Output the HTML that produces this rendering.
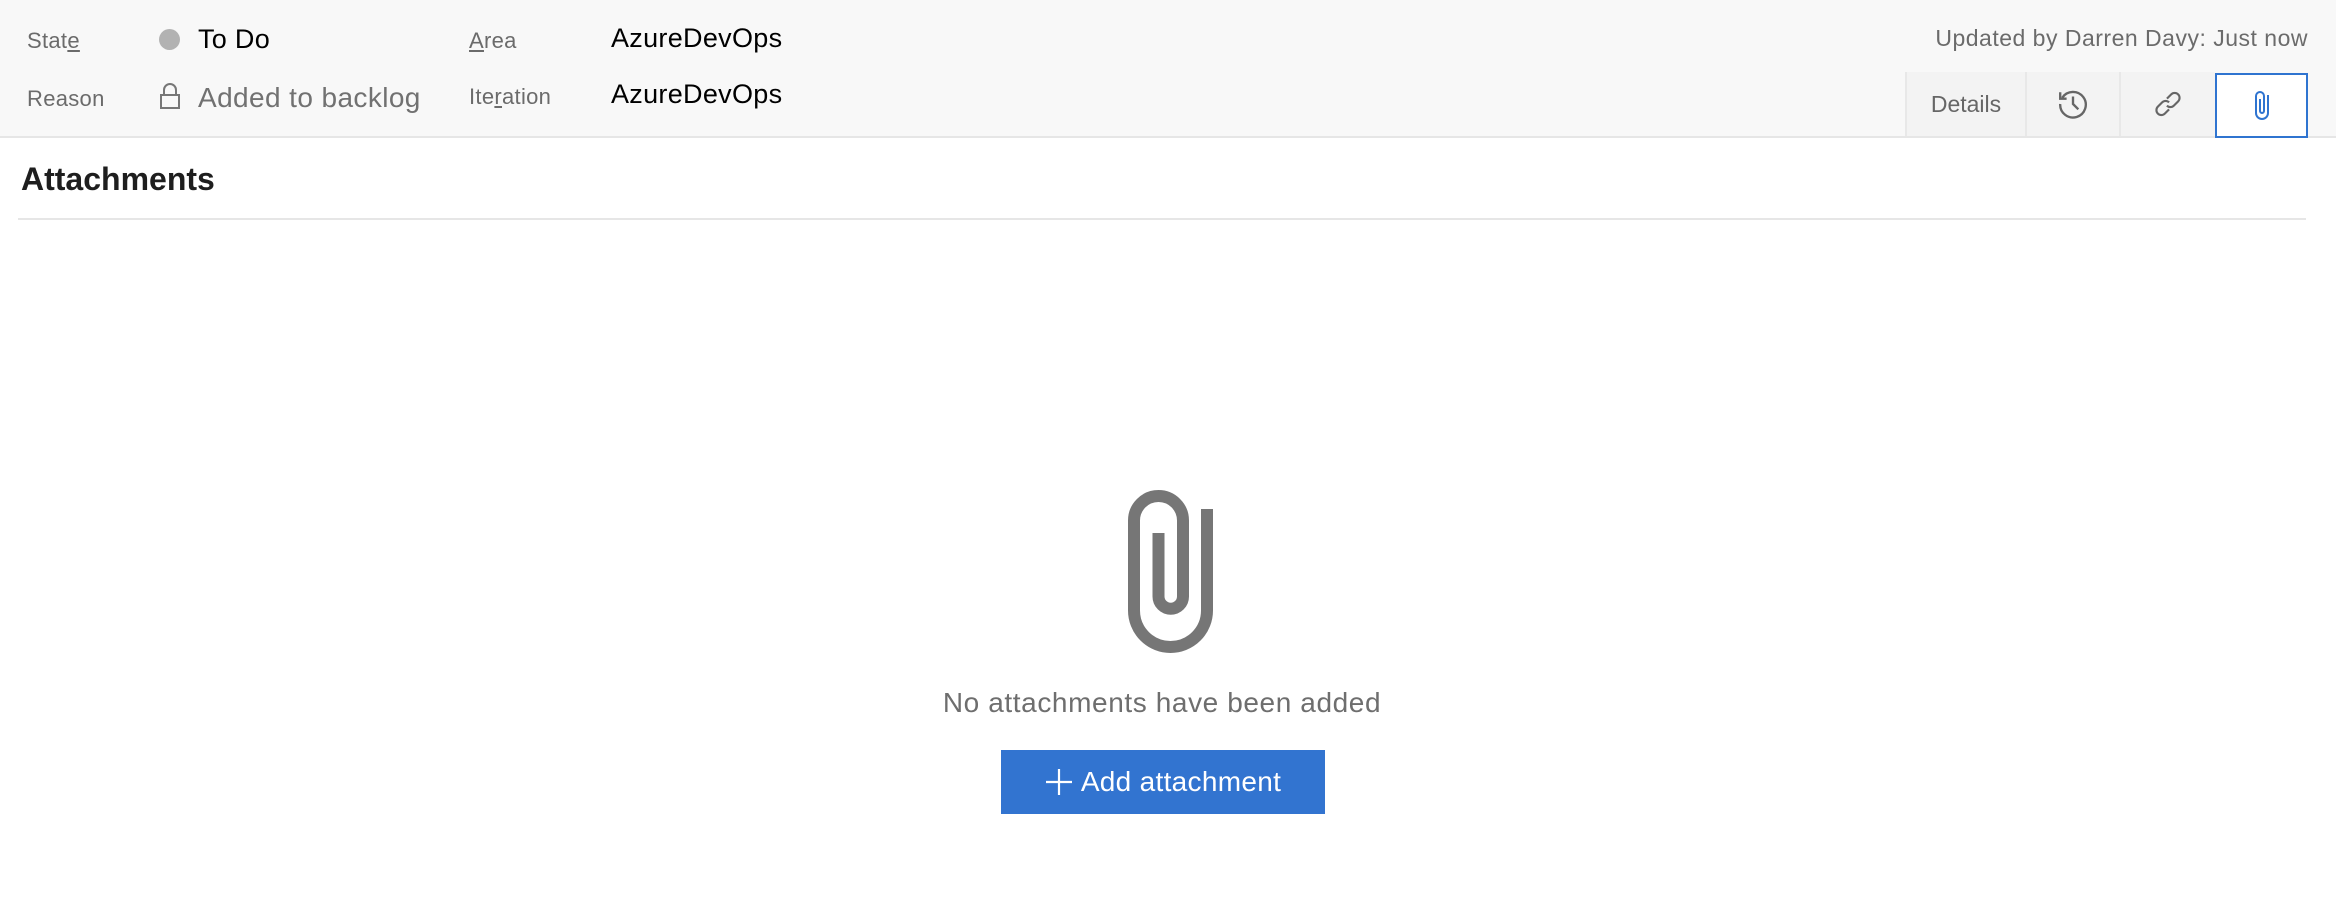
<!DOCTYPE html>
<html><head><style>
body{margin:0;width:2336px;height:918px;background:#fff;font-family:"Liberation Sans",sans-serif;position:relative;overflow:hidden}
.hdr{position:absolute;left:0;top:0;width:2336px;height:136px;background:#f8f8f8;border-bottom:2px solid #e6e6e6}
.t{position:absolute;white-space:nowrap;line-height:1}
.lbl{font-size:22px;color:#6b6b6b;letter-spacing:0.3px}
.val{font-size:27px;color:#000;letter-spacing:0.3px}
.tab{position:absolute;top:72px;height:64px;background:#f3f3f3;border-left:2px solid #e8e8e8;box-sizing:border-box;display:flex;align-items:center;justify-content:center}
</style></head><body>
<div class="hdr"></div>
<div class="t lbl" style="left:27px;top:30px">Stat<u>e</u></div>
<div style="position:absolute;left:159px;top:29px;width:21px;height:21px;border-radius:50%;background:#b2b2b2"></div>
<div class="t val" style="left:198px;top:26px">To Do</div>
<div class="t lbl" style="left:469px;top:30px"><u>A</u>rea</div>
<div class="t val" style="left:611px;top:25px">AzureDevOps</div>
<div class="t lbl" style="left:27px;top:88px">Reason</div>
<svg style="position:absolute;left:159px;top:82px" width="22" height="28" viewBox="0 0 22 28"><path d="M5 13V8a6 6 0 0 1 12 0v5M2 13h18v13H2z" fill="none" stroke="#777" stroke-width="2"/></svg>
<div class="t" style="left:198px;top:84px;font-size:28px;color:#717171;letter-spacing:0.4px">Added to backlog</div>
<div class="t lbl" style="left:469px;top:86px">Ite<u>r</u>ation</div>
<div class="t val" style="left:611px;top:81px">AzureDevOps</div>
<div class="t" style="right:28px;top:27px;font-size:23px;color:#6b6b6b;letter-spacing:0.5px">Updated by Darren Davy: Just now</div>
<div class="tab" style="left:1905px;width:120px;font-size:23px;color:#666">Details</div>
<div class="tab" style="left:2025px;width:94px"><svg width="32" height="32" viewBox="0 0 30 30"><path d="M5 9A12 12 0 1 1 3 15M3 4v6h6M15 8v7l5 5" fill="none" stroke="#666" stroke-width="2.2"/></svg></div>
<div class="tab" style="left:2119px;width:96px"><svg width="32" height="32" viewBox="0 0 30 30"><path d="M14 10l4-4a4.5 4.5 0 0 1 6.5 6.5l-4 4a4.5 4.5 0 0 1-6.5 0M16 20l-4 4a4.5 4.5 0 0 1-6.5-6.5l4-4a4.5 4.5 0 0 1 6.5 0" fill="none" stroke="#666" stroke-width="2"/></svg></div>
<div style="position:absolute;left:2215px;top:73px;width:93px;height:65px;background:#fff;border:2px solid #2f74d0;box-sizing:border-box;display:flex;align-items:center;justify-content:center"><svg width="16" height="30" viewBox="0 0 16 30"><path d="M6 8V20A2 2 0 0 0 10 20V5A4 4 0 0 0 2 5V22A6 6 0 0 0 14 22V4" fill="none" stroke="#2f74d0" stroke-width="2"/></svg></div>
<div class="t" style="left:21px;top:163px;font-size:32px;font-weight:bold;color:#1e1e1e">Attachments</div>
<div style="position:absolute;left:18px;top:218px;width:2288px;height:2px;background:#e6e6e6"></div>
<svg style="position:absolute;left:1127px;top:490px" width="88" height="165" viewBox="0 0 86 165"><path d="M30.5 43V106.5A12.25 12.25 0 0 0 55 106.5V30.5A24.5 24.5 0 0 0 6 30.5V120.5A36.5 36.5 0 0 0 79 120.5V19" fill="none" stroke="#767676" stroke-width="12"/></svg>
<div class="t" style="left:0;width:2324px;text-align:center;top:689px;font-size:28px;color:#6e6e6e;letter-spacing:0.6px">No attachments have been added</div>
<div style="position:absolute;left:1001px;top:750px;width:324px;height:64px;background:#3274d0;color:#fff;font-size:28px;letter-spacing:0.3px;display:flex;align-items:center;justify-content:center"><svg width="28" height="28" viewBox="0 0 28 28" style="margin-right:8px"><path d="M14 1v26M1 14h26" stroke="#fff" stroke-width="2.2"/></svg>Add attachment</div>
</body></html>
